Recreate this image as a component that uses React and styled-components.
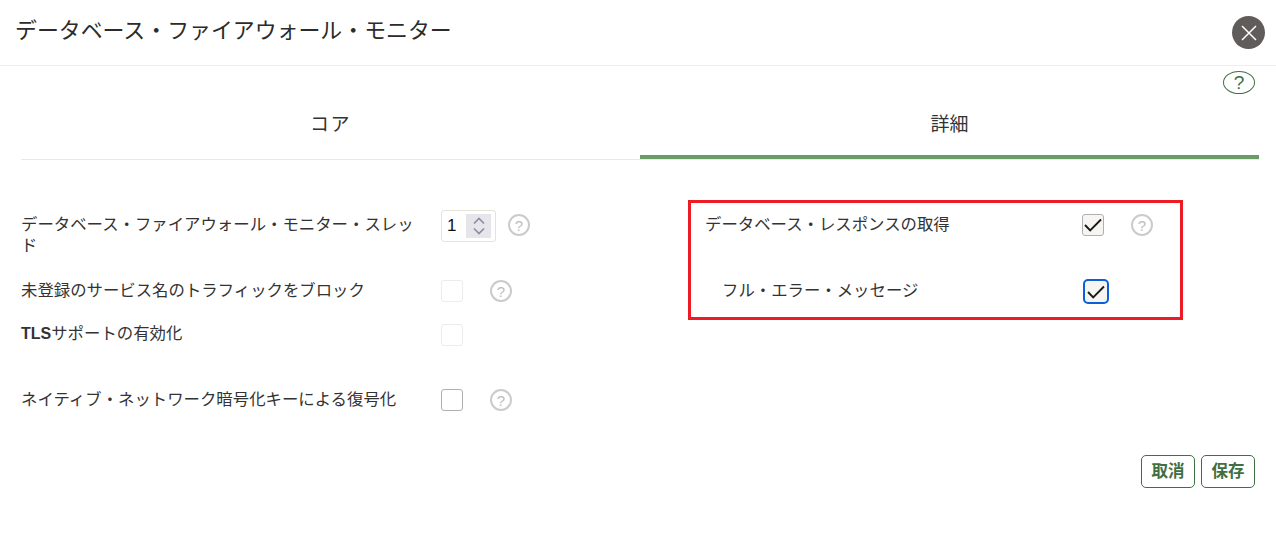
import React from 'react'
import styled, { createGlobalStyle } from 'styled-components'

const GlobalStyle = createGlobalStyle`
  html, body {
    margin: 0;
    padding: 0;
    background: #fff;
  }
  body {
    font-family: "Noto Sans CJK JP", "Liberation Sans", sans-serif;
    color: #333;
  }
`

const Check = () => (
  <svg width="18" height="14" viewBox="0 0 18 14" fill="none">
    <path d="M1 7 L6.2 12.5 L17 1.5" stroke="#1a1a1a" strokeWidth="1.9" />
  </svg>
)

const Help = () => <HelpIcon>?</HelpIcon>

const App = () => {
  return (
    <Page>
      <GlobalStyle />
      <Header>
        <Title>データベース・ファイアウォール・モニター</Title>
        <CloseButton>
          <svg width="16" height="16" viewBox="0 0 16 16" fill="none">
            <path d="M1 1 L15 15 M15 1 L1 15" stroke="#fff" strokeWidth="1.5" />
          </svg>
        </CloseButton>
      </Header>

      <HelpRow>
        <PageHelp>?</PageHelp>
      </HelpRow>

      <Tabs>
        <Tab $spread>コア</Tab>
        <Tab $active>詳細</Tab>
      </Tabs>

      <Body>
        <LeftColumn>
          <Row $height={70}>
            <Label $top={3}>データベース・ファイアウォール・モニター・スレッド</Label>
            <Stepper>
              <span>1</span>
              <Spin>
                <svg width="14" height="20" viewBox="0 0 14 20" fill="none">
                  <path d="M2 7.5 L7 2.5 L12 7.5 M2 12.5 L7 17.5 L12 12.5" stroke="#8f8c9c" strokeWidth="1.7" />
                </svg>
              </Spin>
            </Stepper>
            <HelpSlot $gap={12} $top={4}><Help /></HelpSlot>
          </Row>
          <Row $height={44}>
            <Label $top={-1}>未登録のサービス名のトラフィックをブロック</Label>
            <CheckBox $disabled />
            <HelpSlot $gap={27}><Help /></HelpSlot>
          </Row>
          <Row $height={65}>
            <Label $top={-2}><b>TLS</b>サポートの有効化</Label>
            <CheckBox $disabled />
          </Row>
          <Row $height={44}>
            <Label $top={-1}>ネイティブ・ネットワーク暗号化キーによる復号化</Label>
            <CheckBox />
            <HelpSlot $gap={27}><Help /></HelpSlot>
          </Row>
        </LeftColumn>

        <RedBox>
          <BoxRow $height={63}>
            <BoxLabel>データベース・レスポンスの取得</BoxLabel>
            <CheckBox $checked $top={1}><Check /></CheckBox>
            <HelpSlot $gap={27} $top={1}><Help /></HelpSlot>
          </BoxRow>
          <BoxRow $height={51}>
            <BoxLabel $indent>フル・エラー・メッセージ</BoxLabel>
            <FocusedBox><Check /></FocusedBox>
          </BoxRow>
        </RedBox>
      </Body>

      <Footer>
        <Button>取消</Button>
        <Button>保存</Button>
      </Footer>
    </Page>
  )
}

export default App

const Page = styled.div`
  width: 1276px;
  height: 533px;
  overflow: hidden;
  background: #fff;
`

const Header = styled.div`
  display: flex;
  align-items: center;
  justify-content: space-between;
  height: 66px;
  box-sizing: border-box;
  padding: 0 11px 1px 15px;
  border-bottom: 1px solid #eeeeee;
`

const Title = styled.h1`
  margin: -8px 0 0;
  font-size: 21.9px;
  font-weight: 400;
  color: #2b2b2b;
`

const CloseButton = styled.div`
  display: flex;
  align-items: center;
  justify-content: center;
  width: 33px;
  height: 33px;
  margin-top: 1px;
  border-radius: 50%;
  background: #5f5c5a;
`

const HelpRow = styled.div`
  display: flex;
  justify-content: flex-end;
  height: 29px;
  padding: 5px 21px 0 0;
  box-sizing: border-box;
`

const PageHelp = styled.div`
  display: flex;
  align-items: center;
  justify-content: center;
  width: 32px;
  height: 23px;
  box-sizing: border-box;
  border: 1px solid #3f6f42;
  border-radius: 50%;
  font-family: "Liberation Sans", sans-serif;
  font-size: 19px;
  color: #3f6f42;
`

const Tabs = styled.div`
  display: flex;
  margin: 0 17px 0 21px;
  height: 64px;
  border-bottom: 1px solid #e8e8e8;
`

const Tab = styled.div`
  flex: 1;
  display: flex;
  align-items: center;
  justify-content: center;
  height: 64px;
  box-sizing: border-box;
  padding-bottom: 6px;
  font-size: 19px;
  letter-spacing: ${p => (p.$spread ? '1.5px' : '0')};
  color: #333;
  border-bottom: 4px solid ${p => (p.$active ? '#6a9c68' : 'transparent')};
`

const Body = styled.div`
  display: flex;
  align-items: flex-start;
  padding: 40px 0 0 20px;
  height: 255px;
  box-sizing: border-box;
`

const LeftColumn = styled.div`
  width: 668px;
  padding-top: 10px;
`

const Row = styled.div`
  display: flex;
  align-items: flex-start;
  height: ${p => p.$height}px;
`

const Label = styled.div`
  width: 421px;
  padding: 0 20px 0 1px;
  box-sizing: border-box;
  margin-top: ${p => p.$top || 0}px;
  font-size: 16.4px;
  line-height: 21px;
  color: #333;

  b {
    font-family: "Liberation Sans", sans-serif;
    font-size: 16px;
    font-weight: 700;
  }
`

const Stepper = styled.div`
  display: flex;
  align-items: center;
  justify-content: space-between;
  width: 55px;
  height: 32px;
  padding: 0 4px 0 5px;
  box-sizing: border-box;
  border: 1px solid #e6e3d8;
  border-radius: 3px;
  font-family: "Liberation Sans", sans-serif;
  font-size: 17px;
  color: #111;
`

const Spin = styled.div`
  display: flex;
  align-items: center;
  justify-content: center;
  width: 25px;
  height: 24px;
  background: #e6e5ec;
`

const HelpSlot = styled.div`
  margin-left: ${p => p.$gap}px;
  margin-top: ${p => p.$top || 0}px;
  display: flex;
`

const HelpIcon = styled.div`
  display: flex;
  align-items: center;
  justify-content: center;
  width: 22px;
  height: 22px;
  box-sizing: border-box;
  border: 2px solid #cbcbcb;
  border-radius: 50%;
  font-family: "Liberation Sans", sans-serif;
  font-size: 15px;
  color: #bdbdbd;
`

const CheckBox = styled.div`
  display: flex;
  align-items: center;
  justify-content: center;
  flex: none;
  width: 22px;
  height: 22px;
  margin-top: ${p => p.$top || 0}px;
  box-sizing: border-box;
  border-radius: 3px;
  border: 1px solid ${p => (p.$disabled ? '#ececec' : '#b0b0b0')};
  background: ${p => (p.$checked ? '#f6f5f2' : '#fff')};
`

const RedBox = styled.div`
  width: 495px;
  height: 120px;
  box-sizing: border-box;
  border: 3px solid #ed1c24;
  padding: 10px 0 0 14px;
`

const BoxRow = styled.div`
  display: flex;
  align-items: flex-start;
  height: ${p => p.$height}px;
`

const BoxLabel = styled.div`
  width: 377px;
  box-sizing: border-box;
  padding-left: ${p => (p.$indent ? 17 : 0)}px;
  padding-top: ${p => (p.$indent ? 3 : 0)}px;
  font-size: 16.4px;
  line-height: 21px;
  color: #333;
`

const FocusedBox = styled.div`
  display: flex;
  margin: 3px 0 0 1px;
  box-sizing: border-box;
  width: 26px;
  height: 25px;
  align-items: center;
  justify-content: center;
  border: 2.5px solid #0b5fd8;
  border-radius: 5px;
  background: #f6f5f2;
`

const Footer = styled.div`
  display: flex;
  justify-content: flex-end;
  gap: 6px;
  padding-right: 21px;
  margin-top: 40px;
`

const Button = styled.div`
  display: flex;
  align-items: center;
  justify-content: center;
  width: 54px;
  height: 33px;
  box-sizing: border-box;
  padding-bottom: 3px;
  border: 1px solid #3f6f42;
  border-radius: 5px;
  font-size: 16.5px;
  font-weight: 700;
  color: #3f6f42;
`
